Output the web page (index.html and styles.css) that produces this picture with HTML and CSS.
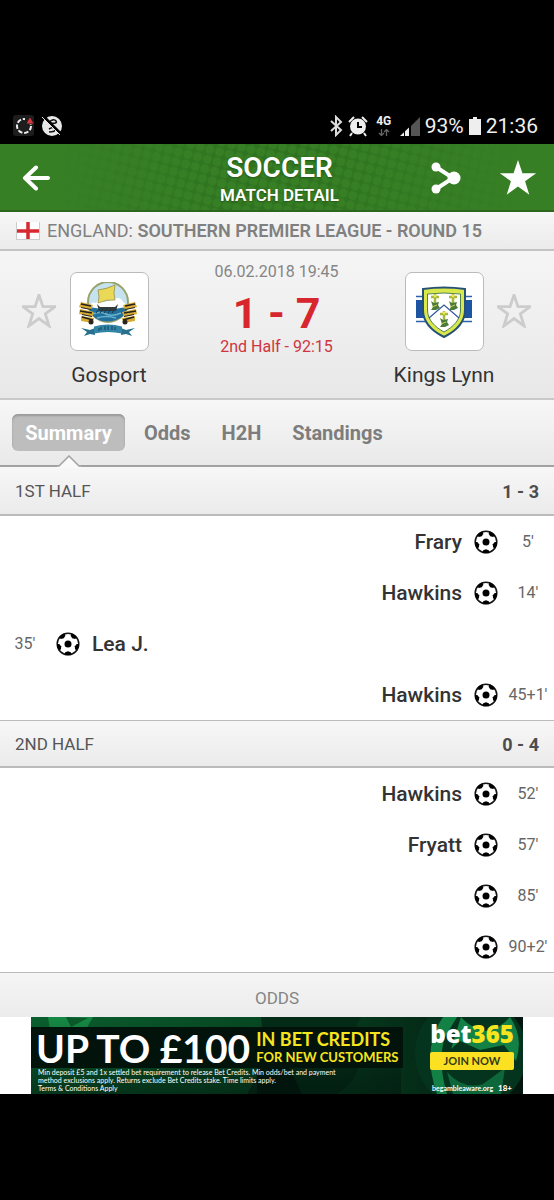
FILE: index.html
```html
<!DOCTYPE html>
<html lang="en">
<head>
<meta charset="utf-8">
<meta name="viewport" content="width=device-width, initial-scale=1">
<title>Soccer match detail</title>
<link rel="stylesheet" href="styles.css">
</head>
<body>
<svg class="defs" aria-hidden="true">
  <symbol id="ball" viewBox="0 0 24 24">
    <circle cx="12" cy="12" r="10.800" fill="#fff" stroke="#151515" stroke-width="1.500"/>
    <circle cx="12" cy="12" r="3.500" fill="#000"/>
    <g fill="#000">
      <path id="patch" d="M8.700 22.500l.5-2.200 2.800-1.100 2.800 1.100.5 2.200-3.300.8z"/>
      <use href="#patch" transform="rotate(72 12 12)"/>
      <use href="#patch" transform="rotate(144 12 12)"/>
      <use href="#patch" transform="rotate(216 12 12)"/>
      <use href="#patch" transform="rotate(288 12 12)"/>
    </g>
  </symbol>
  <symbol id="star" viewBox="0 0 36 36">
    <path d="M18 1l4.200 12.400h13L24.700 21l4 12.800L18 26l-10.700 7.800 4-12.800L.8 13.400h13z"/>
  </symbol>
</svg>

<div class="status">
  <div class="status-group">
    <svg width="22" height="22" viewBox="0 0 22 22"><rect width="21" height="21" rx="3" fill="#1d1d1d"/><circle cx="11" cy="11" r="7" fill="none" stroke="#eee" stroke-width="2" stroke-dasharray="4.500 1.800"/><path d="M12 9V2h9v7z" fill="#1d1d1d"/><path d="M13.500 8.500l3.500-6 3.500 6z" fill="#d8393c"/></svg>
    <svg width="22" height="22" viewBox="0 0 22 22"><circle cx="11" cy="11" r="10" fill="#e8e8e8"/><path d="M8 7q5-4 7-1t-6 2M8 14q5-3 6 0t-6 3" fill="none" stroke="#111" stroke-width="1.500"/><path d="M2 1l19 19" stroke="#000" stroke-width="3"/><path d="M1 2l18 18" stroke="#e8e8e8" stroke-width="1"/></svg>
  </div>
  <div class="status-group status-right">
    <svg width="14" height="22" viewBox="0 0 14 22"><path d="M2 6l10 9-5 5V2l5 5-10 9" fill="none" stroke="#ddd" stroke-width="2"/></svg>
    <svg width="20" height="22" viewBox="0 0 20 22"><circle cx="10" cy="11.500" r="8" fill="#eee"/><path d="M1 7l5-5M19 7l-5-5M4 18l-2 3M16 18l2 3" stroke="#eee" stroke-width="2"/><path d="M10 7v5h4" fill="none" stroke="#000" stroke-width="2"/></svg>
    <div class="network"><span>4G</span><svg width="12" height="7" viewBox="0 0 12 7"><path d="M3.500 0v6M1 4l2.500 2.500L6 4M8.500 7V1M6 3L8.500.5 11 3" fill="none" stroke="#666" stroke-width="1.300"/></svg></div>
    <svg width="20" height="20" viewBox="0 0 20 20"><path d="M20 1v19h-9V10z" fill="#555"/><path d="M9 11.500V20H0z" fill="#eee"/><path d="M4.500 15v5" stroke="#000" stroke-width="1"/></svg>
    <span>93%</span>
    <svg width="12" height="18" viewBox="0 0 12 18"><path d="M4 0h4v2h4v16H0V2h4z" fill="#eee"/></svg>
    <span>21:36</span>
  </div>
</div>

<header class="top">
  <svg class="dots" viewBox="0 0 554 67" preserveAspectRatio="xMidYMid slice" aria-hidden="true">
    <defs>
      <pattern id="dot" width="10" height="10" patternUnits="userSpaceOnUse" patternTransform="rotate(14)"><rect width="10" height="10" fill="#2f7320"/><circle cx="5" cy="5" r="4.500" fill="#377f25"/></pattern>
      <linearGradient id="fade"><stop offset=".1" stop-color="#000"/><stop offset=".42" stop-color="#fff"/><stop offset=".58" stop-color="#fff"/><stop offset=".95" stop-color="#000"/></linearGradient>
      <mask id="fademask"><rect width="554" height="67" fill="url(#fade)"/></mask>
    </defs>
    <rect width="554" height="67" fill="url(#dot)" mask="url(#fademask)"/>
  </svg>
  <button class="icon-button back" aria-label="Back"><svg width="28" height="26" viewBox="0 0 28 26"><path d="M14 2.500L3 13l11 10.500M4 13h22" fill="none" stroke="#fff" stroke-width="4" stroke-linejoin="round" stroke-linecap="round"/></svg></button>
  <div class="heading"><h1>SOCCER</h1><p>MATCH DETAIL</p></div>
  <div class="actions">
    <button class="icon-button" aria-label="Share"><svg width="30" height="32" viewBox="0 0 30 32"><path d="M5 5l17 11L5 27" fill="none" stroke="#fff" stroke-width="4"/><g fill="#fff"><circle cx="5" cy="5" r="4.500"/><circle cx="23" cy="16" r="6.500"/><circle cx="5" cy="27" r="4.500"/></g></svg></button>
    <button class="icon-button favourite" aria-label="Favourite match"><svg width="38" height="38"><use href="#star"/></svg></button>
  </div>
</header>

<main>
  <div class="league">
    <svg class="flag" width="24" height="18" viewBox="0 0 24 18"><rect width="24" height="18" fill="#fdfdfd"/><path d="M12 0v18M0 9h24" stroke="#d62a30" stroke-width="3.500"/><path d="M0 17.500h24M.5 0v18M23.500 0v18" stroke="#ccc"/></svg>
    <span>ENGLAND: <b>SOUTHERN PREMIER LEAGUE - ROUND 15</b></span>
  </div>

  <section class="match">
    <button class="icon-button outline-star" aria-label="Follow Gosport"><svg width="34" height="34"><use href="#star"/></svg></button>
    <div class="team">
      <div class="crest">
        <svg width="60" height="60" viewBox="0 0 60 60">
          <circle cx="29" cy="20" r="20" fill="#c5e2ee" stroke="#98a36a" stroke-width="2"/>
          <path d="M10 24q3-5 7-3 4-6 8-1l8-2q8-5 11 2l4 3v4H10z" fill="#fff"/>
          <path d="M10 25q19 4 38 0 0 9-11 13-9 3-17 0-9-4-10-13z" fill="#206f9c"/>
          <path d="M14 32q7-3 13 0t15-1M18 36q9-3 19 0" fill="none" stroke="#69b2cc" stroke-width="1.500"/>
          <path d="M19 8q9-1 17-5-2 9 0 15-8-1-17 3 2-6 0-13z" fill="#e9d957" stroke="#8f8436" stroke-width=".7"/>
          <path d="M18 22l3 3h15l3-3-2 7H20z" fill="#333b3d"/>
          <path d="M20 27l-3 4m7-4l-3 4m7-4l-3 4m7-4l-3 4m7-4l-3 4" stroke="#173848"/>
          <g id="cannons"><path d="M2 20l12 3-2 5-12-3zM1 27l14 3-2 5-13-3zM2 34l13 2-1 5-12-2z" fill="#d5ab35"/><path d="M2 22l10 2M1 29l12 2M3 35l11 3" stroke="#24211c" stroke-width="1.700"/><path d="M2 25.500l10 2M3 32.500l10 2" stroke="#24211c"/><circle cx="12" cy="40" r="2.500" fill="#292620"/></g>
          <use href="#cannons" transform="matrix(-1 0 0 1 58 0)"/>
          <path d="M2 46l9 2 5-2v7l-5-1-6 2 3-4zM56 46l-9 2-5-2v7l5-1 6 2-3-4z" fill="#28708e"/>
          <path d="M15 44.500q14-4 28 0v7q-14-3-28 0z" fill="#3284a5"/>
          <path d="M20 46v3m2-4v3m4-4v4m3-4v4m4-4v4m3-3v3" stroke="#1b526e" stroke-width="1.300"/>
        </svg>
      </div>
      <span>Gosport</span>
    </div>
    <div class="score">
      <time>06.02.2018 19:45</time>
      <strong>1 - 7</strong>
      <span>2nd Half - 92:15</span>
    </div>
    <div class="team">
      <div class="crest">
        <svg width="60" height="60" viewBox="0 0 60 60">
          <rect x="2" y="18" width="56" height="18" fill="#1d55a3"/>
          <path d="M2 14.500h56M2 39.500h56" stroke="#2c62a8" stroke-width="1.500"/>
          <path d="M9 7q21-3 42 0v21c0 13-9 21-21 27C18 49 9 41 9 28z" fill="#d9e84a" stroke="#275174" stroke-width="2"/>
          <path d="M13.500 12q16.500-2 33 0v16c0 10-7.500 17-16.500 22-9-5-16.500-12-16.500-22z" fill="#fff" stroke="#55834c"/>
          <path d="M15 36l15-13 15 13" fill="none" stroke="#31579c" stroke-width="1.200"/>
          <g id="charge"><path d="M21 12v11m-4-8h8" stroke="#a6b939" stroke-width="2.500"/><path d="M17 19l3 2 5-1-1 3 2 3-4 2h-5l2-3z" fill="#4b7a3c"/><path d="M18 25l5-2" stroke="#c4d44a"/><circle cx="21" cy="14" r="1.400" fill="#eee94e"/></g>
          <use href="#charge" x="18"/><use href="#charge" x="9" y="17"/>
        </svg>
      </div>
      <span>Kings Lynn</span>
    </div>
    <button class="icon-button outline-star" aria-label="Follow Kings Lynn"><svg width="34" height="34"><use href="#star"/></svg></button>
  </section>

  <nav class="tabs">
    <a href="#summary" class="active" aria-current="page">Summary<svg class="pointer" width="24" height="13" viewBox="0 0 24 13"><path d="M0 11h2L12 1l10 10h2v2H0z" fill="#f9f9f9"/><path d="M0 11h2L12 1l10 10h2" fill="none" stroke="#a2a2a2" stroke-width="1.500"/></svg></a>
    <a href="#odds">Odds</a>
    <a href="#h2h">H2H</a>
    <a href="#standings">Standings</a>
  </nav>

  <section id="summary">
    <h2 class="period"><span>1ST HALF</span><b>1 - 3</b></h2>
    <ul class="events">
      <li class="away"><span class="minute">5'</span><svg class="ball"><use href="#ball"/></svg><span>Frary</span></li>
      <li class="away"><span class="minute">14'</span><svg class="ball"><use href="#ball"/></svg><span>Hawkins</span></li>
      <li><span class="minute">35'</span><svg class="ball"><use href="#ball"/></svg><span>Lea J.</span></li>
      <li class="away"><span class="minute">45+1'</span><svg class="ball"><use href="#ball"/></svg><span>Hawkins</span></li>
    </ul>
    <h2 class="period"><span>2ND HALF</span><b>0 - 4</b></h2>
    <ul class="events">
      <li class="away"><span class="minute">52'</span><svg class="ball"><use href="#ball"/></svg><span>Hawkins</span></li>
      <li class="away"><span class="minute">57'</span><svg class="ball"><use href="#ball"/></svg><span>Fryatt</span></li>
      <li class="away"><span class="minute">85'</span><svg class="ball"><use href="#ball"/></svg></li>
      <li class="away"><span class="minute">90+2'</span><svg class="ball"><use href="#ball"/></svg></li>
    </ul>
  </section>
  <h2 class="odds" id="odds">ODDS</h2>
</main>

<aside class="ad-strip">
  <div class="ad">
    <svg class="ad-art" viewBox="0 0 492 77" preserveAspectRatio="none" aria-hidden="true">
      <defs><linearGradient id="turf"><stop stop-color="#0b602e"/><stop offset=".55" stop-color="#064522"/><stop offset="1" stop-color="#03150e"/></linearGradient><linearGradient id="shade" x2="0" y2="1"><stop stop-color="#02150d" stop-opacity="0"/><stop offset="1" stop-color="#02150d" stop-opacity=".55"/></linearGradient></defs>
      <rect width="492" height="77" fill="url(#turf)"/>
      <path d="M17 0h45l-8 14-20 7-15-8z" fill="#168844"/><path d="M35 0l5 10 17-9" fill="#0a5b2c"/>
      <path d="M230 0h100q-12 20-4 40 6 20-20 37h-90q20-30 14-77z" fill="#032c17"/>
      <path d="M226 52l30-6 15 31h-45z" fill="#02150d"/>
      <rect width="370" height="77" fill="url(#shade)"/>
      <circle cx="440" cy="36" r="56" fill="#04341d"/>
      <path d="M412 0q-22 31-6 77h10q-10-33-2-57l12-20zM430 0q10 12 25 14 14-2 24-14 14 20 6 44l-12-16-24 5-20-9-9 8z" fill="#138045"/>
      <path d="M416 55q16 18 36 12l22-16-4 26h-48z" fill="#0d673a"/>
    </svg>
    <div class="offer">
      <div class="offer-main"><strong>UP TO £100</strong><p><span>IN BET CREDITS</span><span class="new">FOR NEW CUSTOMERS</span></p></div>
      <small>Min deposit £5 and 1x settled bet requirement to release Bet Credits. Min odds/bet and payment<br>method exclusions apply. Returns exclude Bet Credits stake. Time limits apply.<br><a href="#terms">Terms &amp; Conditions Apply</a></small>
    </div>
    <div class="brand">
      <div class="logo">bet<span>365</span></div>
      <button class="join">JOIN NOW</button>
      <div class="safer"><span>begambleaware.org</span><b>18+</b></div>
    </div>
  </div>
</aside>
</body>
</html>
```
FILE: styles.css
```css
* { box-sizing: border-box; }
body { margin: 0; min-height: 100vh; background: #000; color: #333; font-family: Roboto, "Liberation Sans", sans-serif; }
h1, h2, p, ul { margin: 0; padding: 0; font-weight: 400; }
svg { display: block; flex: none; }
a { color: inherit; text-decoration: none; }
.defs { position: absolute; width: 0; height: 0; }
.icon-button { border: 0; background: none; padding: 0; color: inherit; }

.status { display: flex; justify-content: space-between; align-items: center; padding: 108px 16px 0 13px; height: 144px; color: #f0f0f0; font-size: 21px; }
.status-group { display: flex; align-items: center; gap: 6px; }
.status-right { gap: 5px; }
.network { display: flex; flex-direction: column; align-items: center; gap: 2px; width: 22px; font-size: 12px; line-height: 11px; font-weight: 700; }

.top { position: relative; display: grid; grid-template-columns: 1fr auto 1fr; align-items: center; height: 68px; padding: 2px 17px 0 22px; background: #377f25; color: #fff; border-bottom: 2px solid #2d671f; }
.top > * { position: relative; }
.top .dots { position: absolute; inset: 0; width: 100%; height: 100%; }
.heading { padding-top: 4px; text-align: center; text-shadow: 0 1px 2px #1f5513; }
.heading h1 { font-size: 28px; line-height: 30px; font-weight: 600; }
.heading p { font-size: 17px; line-height: 24px; font-weight: 600; }
.back { justify-self: start; }
.actions { display: flex; justify-content: flex-end; align-items: center; gap: 38px; }
.favourite { fill: #fff; }

.league { display: flex; align-items: center; gap: 7px; height: 39px; padding: 0 16px; background: linear-gradient(#f7f7f7, #ebebeb); border-bottom: 2px solid #c4c4c4; color: #808080; font-size: 18px; white-space: nowrap; }
.league b { font-weight: 600; }
.match { display: grid; grid-template-columns: 34px 100px 1fr 100px 34px; justify-content: space-between; column-gap: 3px; padding: 21px 23px 0 22px; height: 149px; background: linear-gradient(#f5f5f5, #e8e8e8); border-bottom: 2px solid #c9c9c9; }
.outline-star { align-self: start; margin-top: 22px; fill: none; stroke: #ccc; stroke-width: 3px; }
.team { display: flex; flex-direction: column; align-items: center; gap: 10px; color: #333; font-size: 21px; line-height: 28px; white-space: nowrap; }
.crest { display: grid; place-items: center; width: 79px; height: 79px; background: #fff; border: 1px solid #bbb; border-radius: 7px; }
.score { display: flex; flex-direction: column; align-items: center; margin-top: -10px; white-space: nowrap; }
.score time { color: #858585; font-size: 16px; line-height: 20px; }
.score strong { color: #d8262e; font-size: 43px; line-height: 46px; margin-top: 8px; }
.score span { color: #cf3540; font-size: 16px; line-height: 22px; }

.tabs { display: flex; align-items: flex-start; gap: 19px; height: 67px; padding: 14px 12px 0; background: linear-gradient(#f7f7f7, #e9e9e9); border-bottom: 2px solid #a2a2a2; color: #7d7d7d; font-size: 20px; line-height: 38px; font-weight: 700; }
.tabs a + a { margin-right: 12px; }
.tabs .active { position: relative; width: 113px; height: 37px; text-align: center; color: #fff; background: #bdbdbd; border-radius: 6px; box-shadow: inset 0 2px 2px #999; }
.pointer { position: absolute; left: 45px; top: 41px; }

.period { display: flex; justify-content: space-between; align-items: center; height: 49px; padding: 1px 15px 0; background: linear-gradient(#f7f7f7, #ebebeb); border-bottom: 2px solid #bbb; color: #555; font-size: 17px; }
.events + .period { height: 48px; border-top: 1px solid #bbb; }
.period b { color: #4d4d4d; font-size: 18px; }
.events { list-style: none; background: #fff; }
.events li { display: flex; align-items: center; gap: 12px; height: 51px; font-size: 21px; font-weight: 500; }
.events .away { flex-direction: row-reverse; }
.minute { width: 50px; margin-right: -6px; text-align: center; color: #666; font-size: 16px; font-weight: 400; }
.away .minute { width: 56px; margin: 0 0 0 -12px; padding-left: 4px; }
.ball { width: 24px; height: 24px; }
.odds { height: 45px; background: linear-gradient(#f5f5f5, #ececec); border-top: 1px solid #bbb; color: #858585; font-size: 17px; line-height: 50px; text-align: center; }

.ad-strip { background: #fff; padding: 0 31px; }
.ad { position: relative; display: flex; justify-content: space-between; height: 77px; color: #fff; font-family: Lato, sans-serif; overflow: hidden; }
.ad > * { position: relative; }
.ad .ad-art { position: absolute; inset: 0; width: 100%; height: 100%; }
.offer { padding-top: 10px; white-space: nowrap; }
.offer-main { display: flex; align-items: center; gap: 6px; height: 41px; padding: 0 5px; background: #02130c; }
.offer-main strong { font-size: 39px; line-height: 40px; }
.offer-main p { display: grid; color: #f6e51e; font-size: 18px; line-height: 19px; font-weight: 700; }
.offer-main .new { font-size: 13px; line-height: 16px; }
.offer small { display: block; padding-left: 7px; font-size: 7px; line-height: 8px; font-weight: 400; }
.brand { display: flex; flex-direction: column; align-items: center; width: 84px; margin-right: 9px; }
.logo { font-family: "Open Sans", sans-serif; font-size: 24px; line-height: 30px; font-weight: 800; padding-top: 2px; }
.logo span { color: #f6e51e; }
.join { width: 84px; height: 18px; margin-top: 3px; padding: 0; border: 0; border-radius: 2px; background: #fbe122; color: #333a16; font: 700 11px/18px Lato, sans-serif; }
.safer { display: flex; justify-content: space-between; align-items: center; width: 80px; margin-top: 13px; font-size: 7px; line-height: 10px; font-weight: 700; }
.safer b { font-size: 8px; }
```
